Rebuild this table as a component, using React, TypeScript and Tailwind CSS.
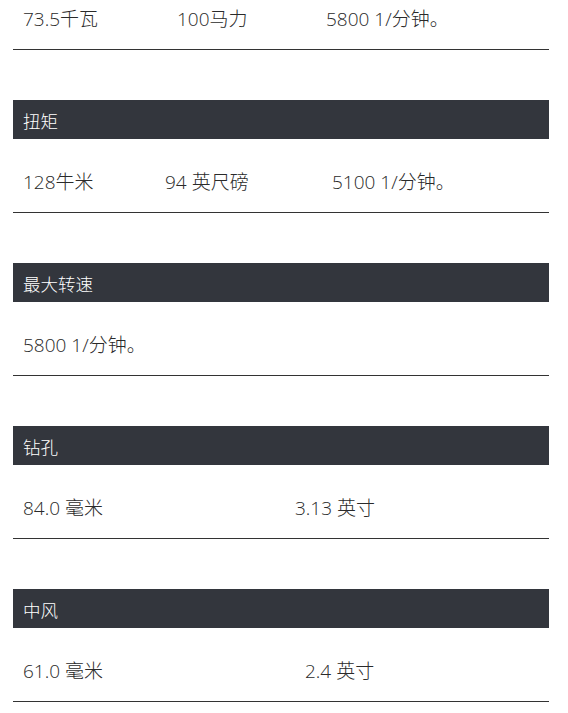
import * as React from "react";

type Section = {
    title: string;
    cols: string;
    values: string[];
};

const sections: Section[] = [
    { title: "功率", cols: "grid-cols-[154px_149px_1fr]", values: ["73.5千瓦", "100马力", "5800 1/分钟。"] },
    { title: "扭矩", cols: "grid-cols-[142px_167px_1fr]", values: ["128牛米", "94 英尺磅", "5100 1/分钟。"] },
    { title: "最大转速", cols: "grid-cols-[1fr]", values: ["5800 1/分钟。"] },
    { title: "钻孔", cols: "grid-cols-[272px_1fr]", values: ["84.0 毫米", "3.13 英寸"] },
    { title: "中风", cols: "grid-cols-[282px_1fr]", values: ["61.0 毫米", "2.4 英寸"] },
];

export default function App() {
    return (
        <div
            className="w-[568px] h-[713px] overflow-hidden bg-white pl-[13px] pr-[19px]"
            style={{ fontFamily: '"Open Sans", "Noto Sans CJK SC", sans-serif' }}
        >
            <div className="-mt-[63px] flex flex-col gap-[50px]">
                {sections.map((s) => (
                    <div key={s.title}>
                        {/* section header */}
                        <div className="h-[39px] bg-[#33363d] pl-[10px] pt-[8px] text-[17.5px] leading-[26px] font-light text-white">
                            {s.title}
                        </div>
                        {/* values row */}
                        <div className={`grid ${s.cols} h-[74px] border-b border-[#333] pt-[30px] text-[19px] leading-[26px] font-light text-[#2a2a2a]`}>
                            {s.values.map((v) => (
                                <div key={v} className="pl-[10px] whitespace-nowrap">
                                    {v}
                                </div>
                            ))}
                        </div>
                    </div>
                ))}
            </div>
        </div>
    );
}
